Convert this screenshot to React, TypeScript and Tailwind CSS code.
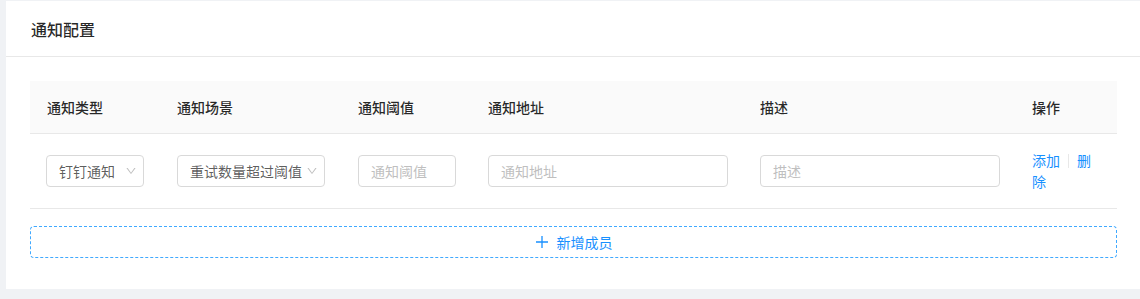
import React from "react";

const font = { fontFamily: '"Noto Sans CJK SC", "Noto Sans", sans-serif' };

const Chevron = () => (
    <svg width="12" height="12" viewBox="0 0 1024 1024" fill="#bfbfbf" className="shrink-0">
        <path d="M884 256h-75c-5.1 0-9.9 2.5-12.9 6.6L512 654.2 227.9 262.6c-3-4.1-7.8-6.6-12.9-6.6h-75c-6.5 0-10.3 7.4-6.5 12.7l352.6 486.1c12.8 17.6 39 17.6 51.7 0l352.6-486.1c3.9-5.3.1-12.7-6.4-12.7z" />
    </svg>
);

const Select = ({ value, width }: { value: string; width: string }) => (
    <div className={`${width} h-8 border border-[#d9d9d9] rounded bg-white flex items-center pl-3 pr-[6px] text-[14px] text-[rgba(0,0,0,0.65)]`}>
        <span className="flex-1 whitespace-nowrap overflow-hidden">{value}</span>
        <Chevron />
    </div>
);

const Input = ({ placeholder, width }: { placeholder: string; width: string }) => (
    <input
        placeholder={placeholder}
        className={`${width} h-8 border border-[#d9d9d9] rounded bg-white px-3 text-[14px] text-[rgba(0,0,0,0.65)] placeholder:text-[#bfbfbf] outline-none`}
        style={font}
    />
);

const columns = [
    { title: "通知类型", w: "w-[131px]" },
    { title: "通知场景", w: "w-[181px]" },
    { title: "通知阈值", w: "w-[130px]" },
    { title: "通知地址", w: "w-[272px]" },
    { title: "描述", w: "w-[272px]" },
    { title: "操作", w: "flex-1" },
];

export default function App() {
    return (
        <div className="h-[299px] bg-[#f0f2f5] pt-px pl-[6px] pb-[10px]" style={font}>
            <div className="h-[288px] bg-white">
                {/* Card header */}
                <div className="h-[56px] border-b border-[#e8e8e8] flex items-center pl-[25px] text-[16px] font-medium text-[rgba(0,0,0,0.85)]">
                    通知配置
                </div>

                <div className="pl-6 pr-[23px] pt-6">
                    {/* Table header */}
                    <div className="flex h-[53px] bg-[#fafafa] border-b border-[#e8e8e8] text-[14px] font-medium text-[rgba(0,0,0,0.85)]">
                        {columns.map((c, i) => (
                            <div key={c.title} className={`${c.w} ${i === 0 ? "pl-[17px]" : "pl-4"} pr-4 flex items-center`}>
                                {c.title}
                            </div>
                        ))}
                    </div>

                    {/* Table row */}
                    <div className="flex h-[75px] border-b border-[#e8e8e8] text-[14px]">
                        <div className="w-[131px] pl-[16px] pr-4 flex items-center">
                            <Select value="钉钉通知" width="w-[98px]" />
                        </div>
                        <div className="w-[181px] px-4 flex items-center">
                            <Select value="重试数量超过阈值" width="w-[148px]" />
                        </div>
                        <div className="w-[130px] px-4 flex items-center">
                            <Input placeholder="通知阈值" width="w-[98px]" />
                        </div>
                        <div className="w-[272px] px-4 flex items-center">
                            <Input placeholder="通知地址" width="w-[240px]" />
                        </div>
                        <div className="w-[272px] px-4 flex items-center">
                            <Input placeholder="描述" width="w-[240px]" />
                        </div>
                        <div className="flex-1 px-4 flex items-center">
                            <div className="text-[#1890ff] leading-[21px] w-[62px]">
                                <div className="flex items-center">
                                    <span>添加</span>
                                    <span className="w-px h-[14px] bg-[#e8e8e8] mx-2"></span>
                                    <span>删</span>
                                </div>
                                <div>除</div>
                            </div>
                        </div>
                    </div>

                    {/* Add member */}
                    <div className="mt-[17px] h-8 border border-dashed border-[#40a9ff] rounded flex items-center justify-center gap-2 text-[14px] text-[#1890ff]">
                        <svg width="14" height="14" viewBox="0 0 14 14" fill="none" stroke="#1890ff" strokeWidth="1.3">
                            <path d="M7 1v12M1 7h12" />
                        </svg>
                        <span>新增成员</span>
                    </div>
                </div>
            </div>
        </div>
    );
}
